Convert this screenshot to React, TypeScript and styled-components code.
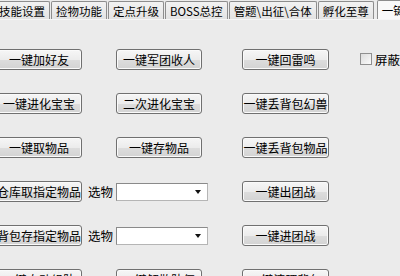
import styled, { createGlobalStyle } from "styled-components";

const GlobalStyle = createGlobalStyle`
  html, body {
    margin: 0;
    padding: 0;
    background: #ebebeb;
    overflow: hidden;
  }
  body {
    font-family: "SimSun", "Noto Sans CJK SC", "DejaVu Sans", sans-serif;
    color: #000;
  }
`;

const tabs = ["技能设置", "捡物功能", "定点升级", "BOSS总控", "管题\\出征\\合体", "孵化至尊"];

type Row = {
  left: string;
  middle: string | null; // null => pick box
  right: string;
  check?: string;
};

const rows: Row[] = [
  { left: "一键加好友", middle: "一键军团收人", right: "一键回雷鸣", check: "屏蔽掉线提示" },
  { left: "一键进化宝宝", middle: "二次进化宝宝", right: "一键丢背包幻兽" },
  { left: "一键取物品", middle: "一键存物品", right: "一键丢背包物品" },
  { left: "仓库取指定物品", middle: null, right: "一键出团战" },
  { left: "背包存指定物品", middle: null, right: "一键进团战" },
  { left: "一键自动组队", middle: "一键解散队伍", right: "一键清理背包" },
];

const App = () => {
  return (
    <>
      <GlobalStyle />
      <Window>
        <TabStrip>
          {tabs.map((t) => (
            <Tab key={t}>{t}</Tab>
          ))}
          <Tab $active>一键功能</Tab>
        </TabStrip>
        <Panel>
          {rows.map((row, i) => (
            <Line key={i}>
              <Button $col={1}>{row.left}</Button>
              {row.middle === null ? (
                <>
                  <PickLabel>选物</PickLabel>
                  <Select>
                    <Arrow />
                  </Select>
                </>
              ) : (
                <Button $col={3}>{row.middle}</Button>
              )}
              <Button $col={5}>{row.right}</Button>
              {row.check && (
                <CheckLabel>
                  <CheckBox />
                  {row.check}
                </CheckLabel>
              )}
            </Line>
          ))}
        </Panel>
      </Window>
    </>
  );
};

export default App;

const Window = styled.div`
  width: 400px;
  height: 276px;
  overflow: hidden;
  background: #ebebeb;
`;

const TabStrip = styled.div`
  display: flex;
  align-items: flex-end;
  gap: 1px;
  height: 19px;
  margin-left: -6px;
  border-bottom: 1px solid #f6f6f6;
  white-space: nowrap;
`;

const Tab = styled.div<{ $active?: boolean }>`
  flex: none;
  height: ${(p) => (p.$active ? "19px" : "18px")};
  box-sizing: border-box;
  padding: 1px 4px 0;
  font-size: 11.5px;
  line-height: 16px;
  border: 1px solid #8d8d8d;
  border-bottom: none;
  border-radius: 2px 2px 0 0;
  background: ${(p) =>
    p.$active ? "#f9f9f9" : "linear-gradient(#f2f2f2, #e3e3e3)"};
  margin-left: ${(p) => (p.$active ? "2px" : "0")};
`;

const Panel = styled.div`
  display: flex;
  flex-direction: column;
  gap: 23px;
  padding-top: 29px;
  margin-left: -4px;
`;

const Line = styled.div`
  display: grid;
  grid-template-columns: 86px 34px 92px 34px 87px 31px auto;
  height: 21px;
  align-items: center;
`;

const Button = styled.div<{ $col: number }>`
  grid-column: ${(p) => p.$col};
  width: ${(p) => (p.$col === 3 ? "86px" : "100%")};
  height: 21px;
  box-sizing: border-box;
  border: 1px solid #707070;
  border-radius: 3px;
  background: linear-gradient(#f6f6f6 0%, #ececec 50%, #dddddd 51%, #d3d3d3 100%);
  box-shadow: inset 0 0 0 1px #fafafa;
  display: flex;
  align-items: center;
  justify-content: center;
  font-size: 12px;
  line-height: 19px;
  white-space: nowrap;
  overflow: hidden;
`;

const PickLabel = styled.span`
  grid-column: 2;
  font-size: 12.5px;
  line-height: 19px;
  padding-left: 6px;
  white-space: nowrap;
`;

const Select = styled.div`
  grid-column: 3;
  position: relative;
  width: 92px;
  height: 18px;
  box-sizing: border-box;
  background: #fff;
  border: 1px solid #b5b5b5;
  border-top-color: #8a8a8a;
  border-left-color: #8a8a8a;
`;

const Arrow = styled.span`
  position: absolute;
  right: 6px;
  top: 6px;
  width: 0;
  height: 0;
  border-left: 3px solid transparent;
  border-right: 3px solid transparent;
  border-top: 4px solid #111;
`;

const CheckLabel = styled.label`
  grid-column: 7;
  display: flex;
  align-items: center;
  gap: 3px;
  font-size: 12.5px;
  white-space: nowrap;
  margin-top: -1px;
`;

const CheckBox = styled.span`
  flex: none;
  width: 12px;
  height: 12px;
  box-sizing: border-box;
  border: 1px solid #8f8f8f;
  background: linear-gradient(135deg, #dcdcdc, #fbfbfb);
`;
